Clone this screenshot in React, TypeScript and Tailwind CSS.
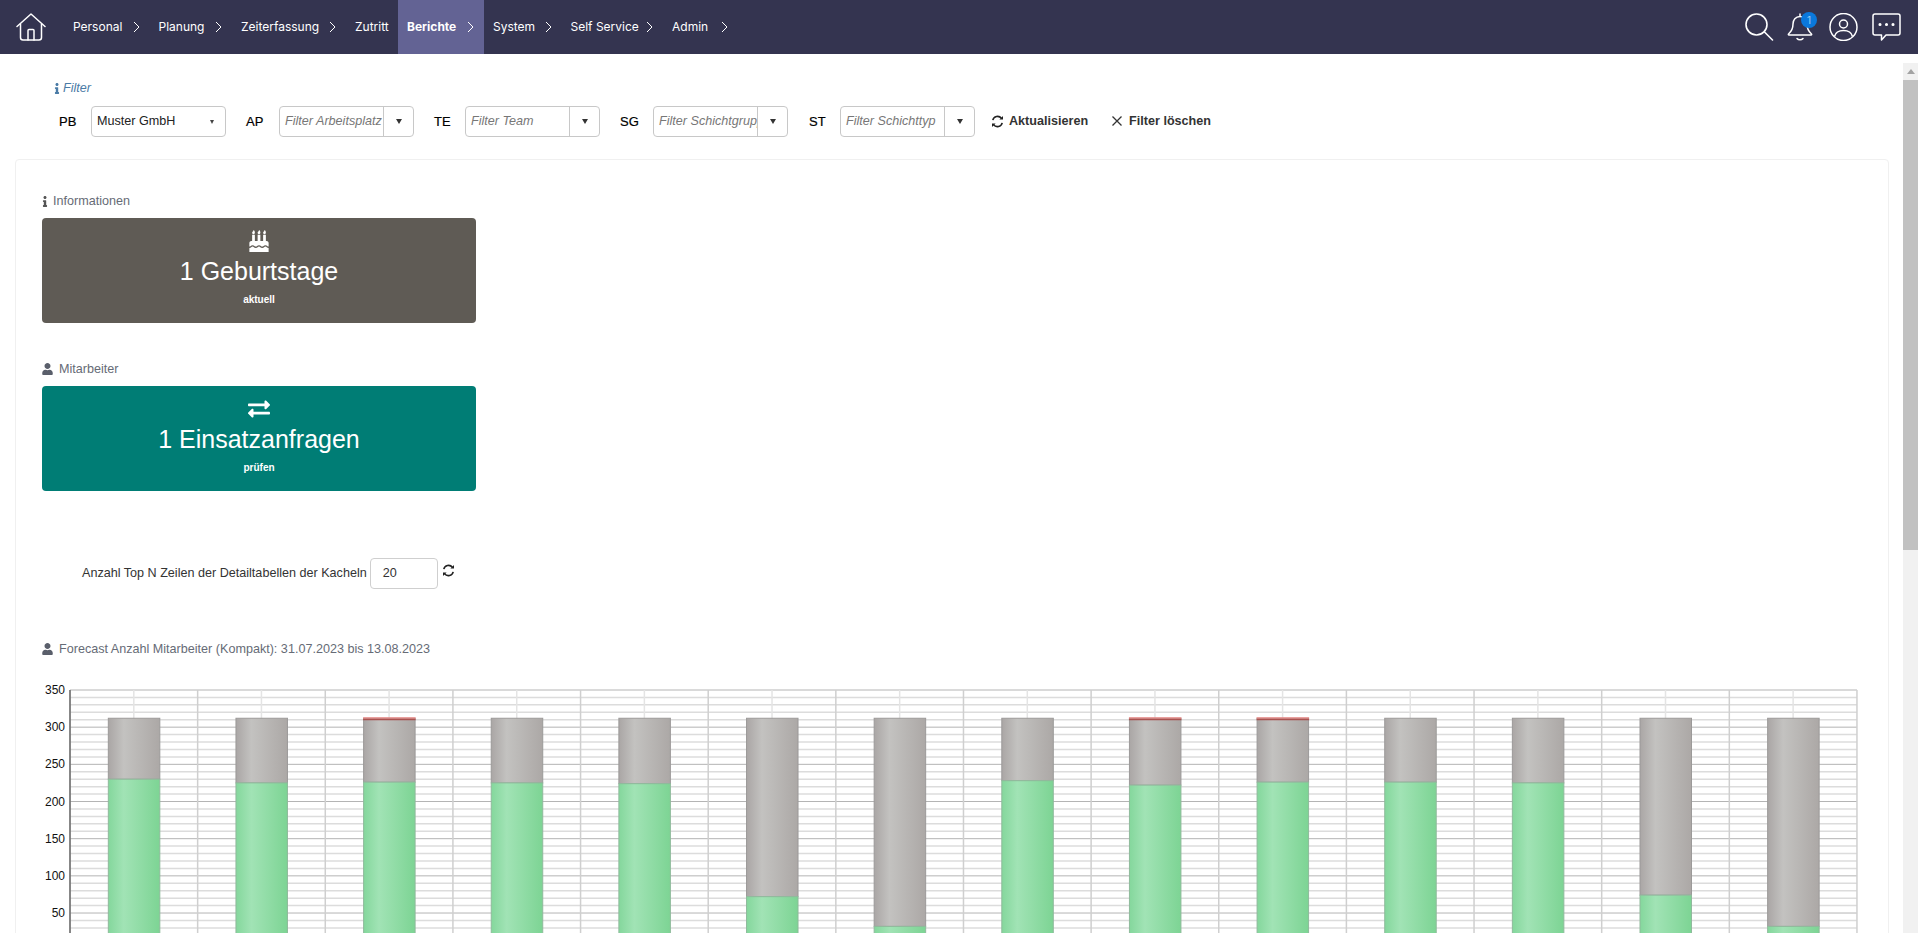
import { FaBirthdayCake, FaExchangeAlt, FaInfo, FaUser } from 'react-icons/fa';

const navItems = [
  { label: 'Personal', width: 'w-[85.5px]', chevron: true },
  { label: 'Planung', width: 'w-[82.5px]', chevron: true },
  { label: 'Zeiterfassung', width: 'w-[114px]', chevron: true },
  { label: 'Zutritt', width: 'w-[52px]', chevron: false },
  { label: 'Berichte', width: 'w-[86px]', chevron: true, active: true },
  { label: 'System', width: 'w-[77.5px]', chevron: true },
  { label: 'Self Service', width: 'w-[101.5px]', chevron: true },
  { label: 'Admin', width: 'w-[75px]', chevron: true },
];

function Chevron() {
  return (
    <svg width="7" height="12" viewBox="0 0 7 12" fill="none" stroke="#fff" strokeWidth="1" className="ml-auto mr-[10px] shrink-0">
      <path d="M1 1l5 5-5 5" />
    </svg>
  );
}

function RefreshIcon() {
  return (
    <svg width="13" height="13" viewBox="0 0 13 13" fill="none" stroke="#222" strokeWidth="1.600" className="shrink-0">
      <path d="M1.800 5.200A4.900 4.900 0 0 1 10.400 3.200" />
      <path d="M11.200 7.800A4.900 4.900 0 0 1 2.600 9.800" />
      <path d="M12 1v3.600H8.400z" fill="#222" stroke="none" />
      <path d="M1 12V8.400h3.600z" fill="#222" stroke="none" />
    </svg>
  );
}

function NavBar() {
  return (
    <header className="flex h-[54px] items-stretch bg-[#343450] text-white font-['Inter',sans-serif] text-[12px]">
      <div className="flex w-[64px] items-center pl-[16px]">
        <svg width="30" height="28" viewBox="0 0 30 28" fill="none" stroke="#fff" strokeWidth="1.500" strokeLinejoin="round" strokeLinecap="round">
          <path d="M1 13.500L15 1l14 12.500" />
          <path d="M4.500 11v13.500a2.500 2.500 0 0 0 2.500 2.500h16a2.500 2.500 0 0 0 2.500-2.500V11" />
          <path d="M12 27v-9.500a1 1 0 0 1 1-1h4a1 1 0 0 1 1 1V27" />
        </svg>
      </div>
      {navItems.map((item) => (
        <div
          key={item.label}
          className={`flex items-center pl-[9px] whitespace-nowrap ${item.width} ${item.active ? 'bg-[#636394] font-bold' : ''}`}
        >
          {item.label}
          {item.chevron && <Chevron />}
        </div>
      ))}
      <div className="ml-auto flex items-center gap-[14px] pr-[17px]">
        <svg width="30" height="28" viewBox="0 0 30 28" fill="none" stroke="#fff" strokeWidth="1.600" strokeLinecap="round" className="-mr-[1px]">
          <circle cx="12.500" cy="11.500" r="10.500" />
          <path d="M20.500 19l8 8" />
        </svg>
        <div className="relative mr-[2px] h-[28px] w-[26px]">
          <svg width="26" height="28" viewBox="0 0 26 28" fill="none" stroke="#fff" strokeWidth="1.500" strokeLinecap="round" strokeLinejoin="round">
            <path d="M13 1v2.500M13 3.500c-4.500 0-7 3.500-7 7.500 0 4-1 7-4.500 10a.6.6 0 0 0 .4 1h22.200a.6.6 0 0 0 .4-1C21 18 20 15 20 11c0-4-2.500-7.500-7-7.500z" />
            <path d="M10 25.500c1.500 1.800 4.500 1.800 6 0" />
          </svg>
          <span className="absolute left-[14px] top-[-1px] flex h-[16px] w-[16px] items-center justify-center rounded-full bg-[#0a78dc] text-[10px] text-[#9ccbf5]">
            1
          </span>
        </div>
        <svg width="29" height="28" viewBox="0 0 29 28" fill="none" stroke="#fff" strokeWidth="1.500">
          <circle cx="14.500" cy="14" r="13.500" />
          <circle cx="14.500" cy="11" r="4" />
          <path d="M5.500 23.500c1-4 4.500-6 9-6s8 2 9 6" />
        </svg>
        <svg width="29" height="28" viewBox="0 0 29 28" fill="none" stroke="#fff" strokeWidth="1.500" strokeLinejoin="round">
          <path d="M3 1h23a2 2 0 0 1 2 2v17a2 2 0 0 1-2 2H14l-4.500 5v-5H3a2 2 0 0 1-2-2V3a2 2 0 0 1 2-2z" />
          <circle cx="8" cy="11.500" r="0.8" fill="#fff" />
          <circle cx="14.500" cy="11.500" r="0.8" fill="#fff" />
          <circle cx="21" cy="11.500" r="0.8" fill="#fff" />
        </svg>
      </div>
    </header>
  );
}

function Caret() {
  return <span className="h-0 w-0 border-x-[3.500px] border-t-[5px] border-x-transparent border-t-[#333]" />;
}

function FilterBox({ placeholder }: { placeholder: string }) {
  return (
    <div className="flex h-[31px] w-[135px] rounded border border-[#c8c8c8] bg-white">
      <div className="flex w-[103px] items-center overflow-hidden whitespace-nowrap pl-[5px] italic text-[#777]">
        {placeholder}
      </div>
      <div className="flex flex-1 items-center justify-center border-l border-[#c8c8c8]">
        <Caret />
      </div>
    </div>
  );
}

function FilterLabel({ width, text }: { width: string; text: string }) {
  return <span className={`text-[13px] text-black [-webkit-text-stroke:0.2px_black] ${width}`}>{text}</span>;
}

function FilterBar() {
  return (
    <div className="pl-[54px] pt-[26px] font-['Liberation_Sans',sans-serif] text-[12.6px]">
      <div className="flex h-[16px] items-center gap-[3px] italic text-[#4a7ba6]">
        <FaInfo className="h-[11px] w-[6px]" />
        Filter
      </div>
      <div className="mt-[10px] flex h-[31px] items-center">
        <FilterLabel width="ml-[5px] w-[32px]" text="PB" />
        <div className="flex h-[31px] w-[135px] items-center rounded border border-[#c8c8c8] bg-white pl-[5px] text-[#222]">
          Muster GmbH
          <span className="ml-auto mr-[11px] h-0 w-0 border-x-[2.500px] border-t-[4px] border-x-transparent border-t-[#444]" />
        </div>
        <FilterLabel width="ml-[20px] w-[33px]" text="AP" />
        <FilterBox placeholder="Filter Arbeitsplatz" />
        <FilterLabel width="ml-[20px] w-[31px]" text="TE" />
        <FilterBox placeholder="Filter Team" />
        <FilterLabel width="ml-[20px] w-[33px]" text="SG" />
        <FilterBox placeholder="Filter Schichtgruppe" />
        <FilterLabel width="ml-[21px] w-[31px]" text="ST" />
        <FilterBox placeholder="Filter Schichttyp" />
        <span className="ml-[16px] flex items-center gap-[5px] font-bold text-[#333]">
          <RefreshIcon />
          Aktualisieren
        </span>
        <span className="ml-[23px] flex items-center gap-[6px] font-bold text-[#333]">
          <svg width="12" height="12" viewBox="0 0 12 12" stroke="#333" strokeWidth="1.300">
            <path d="M1.500 1.500l9 9M10.500 1.500l-9 9" />
          </svg>
          Filter löschen
        </span>
      </div>
    </div>
  );
}

const chartLeft = 70;
const chartTop = 20;
const columnWidth = 127.64;
const unit = 37.17 / 50;
const greenValues = [230, 225, 226, 225, 224, 72, 32, 228, 222, 226, 226, 225, 74, 32];
const redBars = [2, 8, 9];

function Chart() {
  const bottom = 300;
  const right = chartLeft + columnWidth * 14;
  const yOf = (value: number) => chartTop + (350 - value) * unit;
  const values = Array.from({ length: 35 }, (_, i) => 350 - i * 10);
  const columns = Array.from({ length: 15 }, (_, i) => i);
  return (
    <svg width="1880" height="300" className="block" style={{ fontFamily: 'Liberation Sans, sans-serif' }}>
      <defs>
        <linearGradient id="grayBar" x1="0" x2="1" y1="0" y2="0">
          <stop offset="0" stopColor="#aaa6a5" />
          <stop offset="0.3" stopColor="#c3c2c0" />
          <stop offset="1" stopColor="#aca8a6" />
        </linearGradient>
        <linearGradient id="greenBar" x1="0" x2="1" y1="0" y2="0">
          <stop offset="0" stopColor="#84d79c" />
          <stop offset="0.3" stopColor="#a1e3b5" />
          <stop offset="1" stopColor="#7dd494" />
        </linearGradient>
      </defs>
      {values.map((v) => (
        <line
          key={v}
          x1={chartLeft}
          x2={right}
          y1={yOf(v)}
          y2={yOf(v)}
          stroke={v % 50 === 0 ? '#b4b4b4' : '#dcdcdc'}
          strokeWidth={v % 50 === 0 ? 1 : 1.500}
        />
      ))}
      {columns.map((i) => (
        <line key={i} x1={chartLeft + columnWidth * i} x2={chartLeft + columnWidth * i} y1={chartTop} y2={bottom} stroke="#cfcfcf" strokeWidth="1.500" />
      ))}
      {greenValues.map((_, i) => (
        <line
          key={i}
          x1={chartLeft + columnWidth * (i + 0.5)}
          x2={chartLeft + columnWidth * (i + 0.5)}
          y1={chartTop}
          y2={bottom}
          stroke="#e4e4e4"
          strokeWidth="1.500"
        />
      ))}
      <line x1={chartLeft} x2={chartLeft} y1={chartTop} y2={bottom} stroke="#333" strokeWidth="1" />
      {[350, 300, 250, 200, 150, 100, 50].map((v) => (
        <text key={v} x={chartLeft - 5} y={yOf(v) + 4} textAnchor="end" fontSize="12" fill="#111">
          {v}
        </text>
      ))}
      {greenValues.map((value, i) => {
        const x = chartLeft + columnWidth * (i + 0.5) - 25.500;
        const top = yOf(312);
        const green = yOf(value);
        return (
          <g key={i}>
            <rect x={x} y={top} width="51.500" height={green - top} fill="url(#grayBar)" stroke="#9c9a99" />
            <rect x={x} y={green} width="51.500" height={bottom - green} fill="url(#greenBar)" stroke="#8fba9c" />
            {redBars.includes(i) && (
              <>
                <rect x={x - 0.500} y={top - 1} width="52.500" height="1.500" fill="#ea8b88" />
                <rect x={x - 0.500} y={top + 0.500} width="52.500" height="1.500" fill="#a9524f" />
              </>
            )}
          </g>
        );
      })}
    </svg>
  );
}

function SectionTitle({ icon, children }: { icon: React.ReactNode; children: React.ReactNode }) {
  return (
    <div className="flex h-[16px] items-center gap-[5px] text-[12.6px] text-[#666b76]">
      {icon}
      {children}
    </div>
  );
}

function Tile({ color, icon, title, sub }: { color: string; icon: React.ReactNode; title: string; sub: string }) {
  return (
    <div className={`flex h-[105px] w-[434px] flex-col items-center rounded-[4px] pt-[12px] text-white ${color}`}>
      {icon}
      <div className="mt-[4px] text-[25px] leading-[30px]">{title}</div>
      <div className="mt-[8px] text-[10px] font-bold leading-[12px]">{sub}</div>
    </div>
  );
}

export default function App() {
  return (
    <div className="flex h-[933px] flex-col overflow-hidden bg-white font-['Liberation_Sans',sans-serif]">
      <NavBar />
      <div className="flex min-h-0 flex-1">
        <main className="min-w-0 flex-1 overflow-hidden">
          <FilterBar />
          <div className="ml-[15px] mr-[14px] mt-[22px] h-[800px] rounded border border-[#f0f0f0] pl-[26px] pt-[33px]">
            <SectionTitle icon={<FaInfo className="h-[11px] w-[6px] text-[#555]" />}>Informationen</SectionTitle>
            <div className="mt-[9px]">
              <Tile
                color="bg-[#5f5b55]"
                icon={<FaBirthdayCake className="h-[22px] w-[20px]" />}
                title="1 Geburtstage"
                sub="aktuell"
              />
            </div>
            <div className="mt-[38px]">
              <SectionTitle icon={<FaUser className="mr-px h-[12px] w-[11px] text-[#5a5f6b]" />}>Mitarbeiter</SectionTitle>
            </div>
            <div className="mt-[9px]">
              <Tile
                color="bg-[#007d75]"
                icon={<FaExchangeAlt className="h-[22px] w-[24px]" />}
                title="1 Einsatzanfragen"
                sub="prüfen"
              />
            </div>
            <div className="mt-[67px] flex items-start pl-[40px] text-[12.6px] text-[#333]">
              <span className="mr-[3px] leading-[31px]">Anzahl Top N Zeilen der Detailtabellen der Kacheln</span>
              <div className="flex h-[31px] w-[68px] items-center rounded border border-[#cfcfcf] pl-[12px]">20</div>
              <span className="ml-[4px] mt-[6px]">
                <RefreshIcon />
              </span>
            </div>
            <div className="mt-[52px]">
              <SectionTitle icon={<FaUser className="mr-px h-[12px] w-[11px] text-[#5a5f6b]" />}>
                Forecast Anzahl Mitarbeiter (Kompakt): 31.07.2023 bis 13.08.2023
              </SectionTitle>
            </div>
            <div className="-ml-[42px] mt-[13px]">
              <Chart />
            </div>
          </div>
        </main>
        <div className="mt-[9px] flex w-[15px] shrink-0 flex-col bg-[#f1f1f1]">
          <div className="flex h-[17px] items-center justify-center">
            <span className="h-0 w-0 border-x-[4px] border-b-[5px] border-x-transparent border-b-[#a3a3a3]" />
          </div>
          <div className="h-[470px] bg-[#c1c1c1]" />
        </div>
      </div>
    </div>
  );
}
